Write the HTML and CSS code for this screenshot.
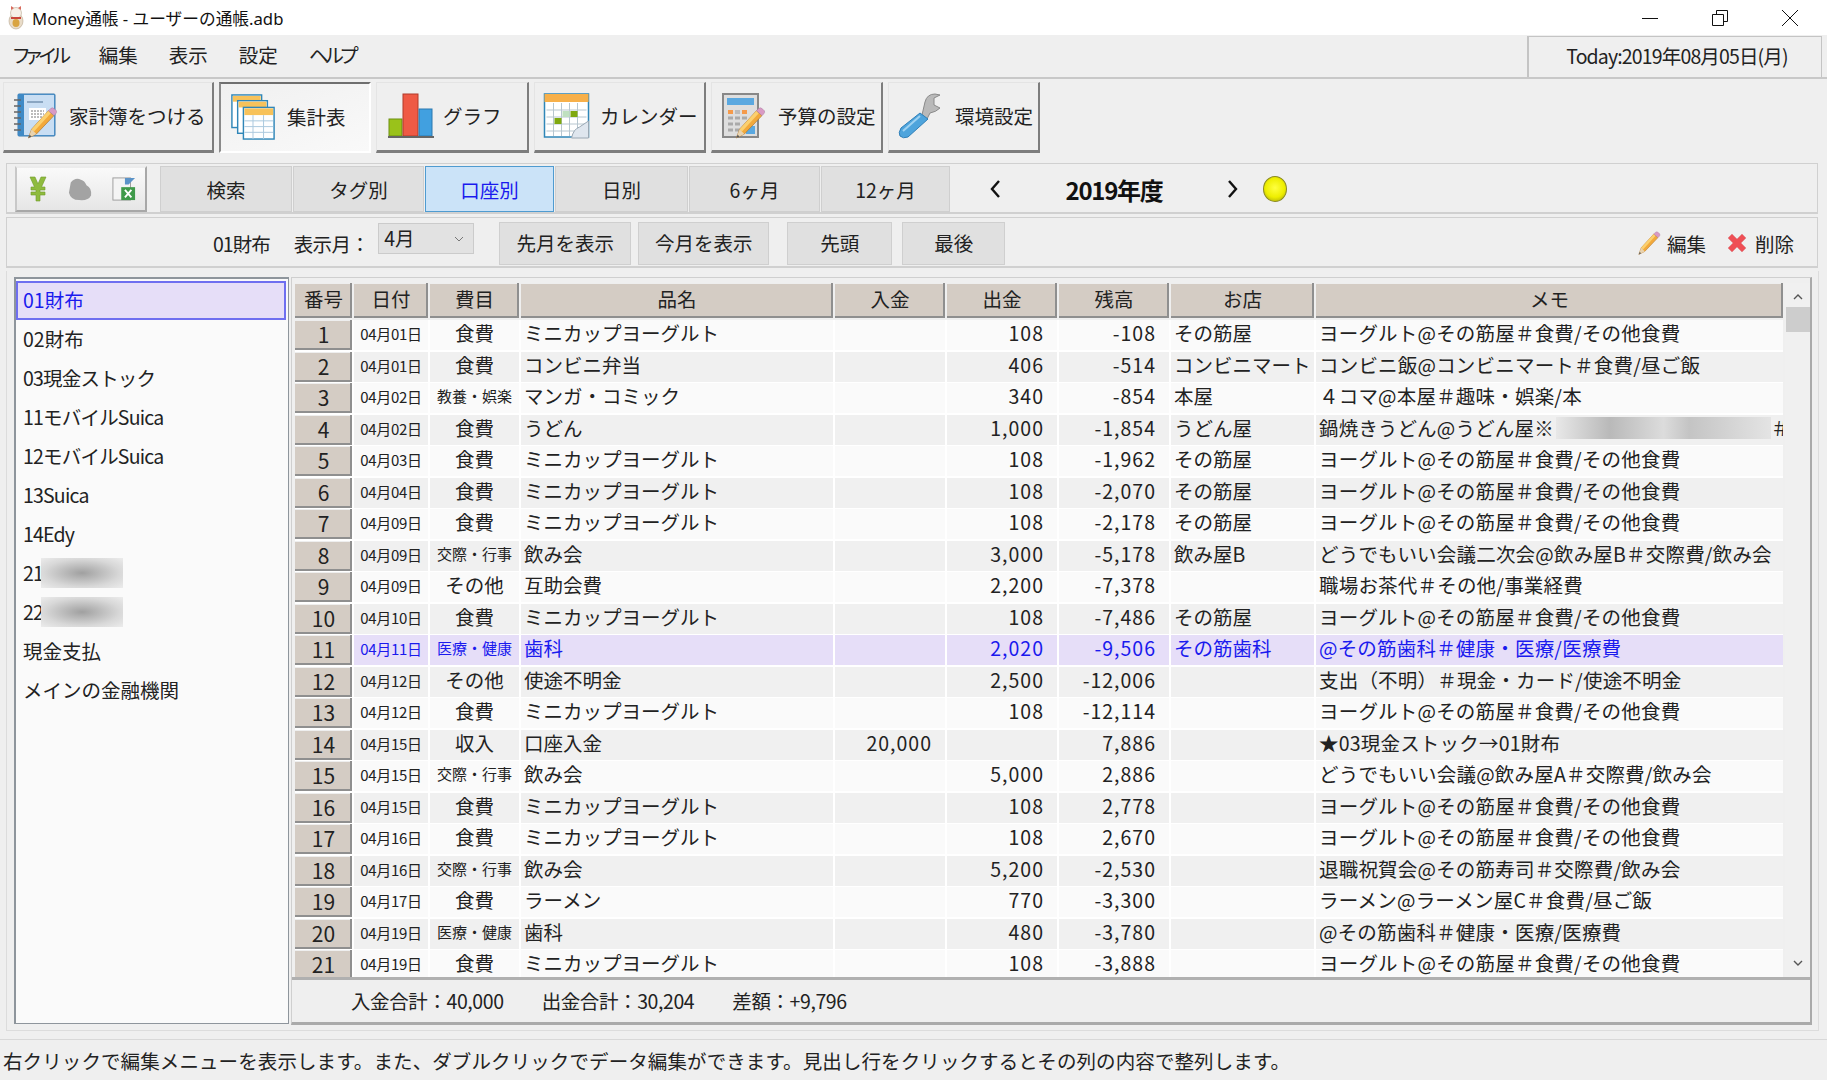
FILE: index.html
```html
<!DOCTYPE html>
<html lang="ja">
<head>
<meta charset="utf-8">
<title>Money通帳</title>
<link rel="stylesheet" href="styles.css">
</head>
<body>
<svg class="defs" width="0" height="0" aria-hidden="true">
  <defs>
    <g id="pencil">
      <path d="M3 40 L7 29 L28 6 L35 12 L13 35 Z" fill="#f2a93b" stroke="#a9702a" stroke-width=".8"/>
      <path d="M7 29 L28 6 L31 9 L10 32 Z" fill="#fbd06f"/>
      <path d="M28 6 L31 3 Q33 1 36 4 L38 6 Q39 8 37 10 L35 12 Z" fill="#d99ac4" stroke="#a57aa0" stroke-width=".6"/>
      <path d="M3 40 L7 29 L13 35 Z" fill="#e8d3b0"/>
      <path d="M3 40 L4.5 36 L7 38 Z" fill="#555"/>
    </g>
  </defs>
</svg>
<div class="app">
  <header class="titlebar">
    <svg class="appicon" viewBox="0 0 20 24"><ellipse cx="10" cy="15" rx="7" ry="8" fill="#e9dcc8" stroke="#b9a890" stroke-width=".6"/><circle cx="10" cy="7" r="5.5" fill="#f6efe6" stroke="#b9a890" stroke-width=".6"/><path d="M5 4 L5 0 L8 2 Z M15 4 L15 0 L12 2 Z" fill="#d96a5c"/><rect x="5" y="11" width="10" height="2" fill="#c9463a"/><ellipse cx="10" cy="17" rx="3.5" ry="4" fill="#d9a441"/></svg>
    <span class="apptitle">Money通帳 - ユーザーの通帳.adb</span>
    <div class="winbtns">
      <svg class="winbtn" viewBox="0 0 16 16"><path d="M0 8.5H16" stroke="#111" fill="none"/></svg>
      <svg class="winbtn" viewBox="0 0 16 16"><path d="M.5 4.5H11.5V15.5H.5Z M4.5 4V.5H15.5V11.5H12" stroke="#111" fill="none"/></svg>
      <svg class="winbtn" viewBox="0 0 16 16"><path d="M0 0L16 16M16 0L0 16" stroke="#111" fill="none"/></svg>
    </div>
  </header>

  <nav class="menubar">
    <span class="menu kana">ファイル</span><span class="menu">編集</span><span class="menu">表示</span><span class="menu">設定</span><span class="menu kana">ヘルプ</span>
    <div class="today">Today:2019年08月05日(月)</div>
  </nav>

  <div class="toolbar">
    <div class="tool w1">
      <svg class="ticon" viewBox="0 0 46 46">
        <rect x="5" y="1" width="37" height="42" rx="1" fill="#5aa0d8" stroke="#3a7bb0"/>
        <rect x="10" y="2" width="31" height="40" fill="#c9def3"/>
        <rect x="5" y="1" width="6" height="42" fill="#3f8ac6"/>
        <path d="M1 7h7M1 13h7M1 19h7M1 25h7M1 31h7M1 37h7" stroke="#666" stroke-width="1.6"/>
        <rect x="14" y="8" width="16" height="2" fill="#8aa6c2"/>
        <rect x="16" y="15" width="17" height="12" fill="#fff"/>
        <path d="M18 18h13M18 21h13M18 24h13" stroke="#777" stroke-dasharray="2 1"/>
        <use href="#pencil" transform="translate(13 13) scale(.8)"/>
      </svg>
      <span>家計簿をつける</span>
    </div>
    <div class="tool w2 active">
      <svg class="ticon" viewBox="0 0 46 48">
        <rect x="1" y="1" width="31" height="34" fill="#fff" stroke="#2f86b8" stroke-width="1.5"/><rect x="2" y="2" width="29" height="6" fill="#f7c25a"/>
        <rect x="7" y="7" width="31" height="34" fill="#fff" stroke="#2f86b8" stroke-width="1.5"/><rect x="8" y="8" width="29" height="6" fill="#f7c25a"/>
        <rect x="13" y="14" width="32" height="33" fill="#fdfeff" stroke="#2f86b8" stroke-width="1.5"/><rect x="14" y="15" width="30" height="7" fill="#f7c25a"/>
        <path d="M14 28h30M14 34h30M14 40h30M23 22v25M34 22v25" stroke="#a9c8de"/>
      </svg>
      <span>集計表</span>
    </div>
    <div class="tool w3">
      <svg class="ticon" viewBox="0 0 46 46">
        <rect x="1" y="26" width="13" height="17" fill="#9ac21a" stroke="#6d8f10"/>
        <rect x="15" y="1" width="15" height="42" fill="#ef5a45" stroke="#b23a2b"/>
        <rect x="31" y="16" width="13" height="27" fill="#41a0e0" stroke="#2a78b0"/>
        <rect x="0" y="43" width="46" height="2" fill="#666"/>
      </svg>
      <span>グラフ</span>
    </div>
    <div class="tool w4">
      <svg class="ticon" viewBox="0 0 46 46">
        <rect x="1" y="1" width="44" height="43" fill="#fff" stroke="#2f86b8" stroke-width="1.5"/>
        <rect x="1" y="1" width="44" height="8" fill="#f7b04a"/>
        <path d="M3 17h40M3 24h40M3 31h40M3 38h40M10 10v33M18 10v33M26 10v33M34 10v33" stroke="#b7c6cf"/>
        <rect x="11" y="25" width="7" height="6" fill="#7fa80f"/><rect x="27" y="18" width="7" height="6" fill="#7fa80f"/><rect x="19" y="18" width="7" height="6" fill="#bfe0c0"/>
        <path d="M28 45 Q30 36 36 34 L45 28 V45Z" fill="#dfe6ee" stroke="#9aa8b4"/>
      </svg>
      <span>カレンダー</span>
    </div>
    <div class="tool w5">
      <svg class="ticon" viewBox="0 0 44 46">
        <rect x="1" y="1" width="35" height="43" fill="#dedede" stroke="#888" stroke-width="2"/>
        <rect x="5" y="5" width="27" height="7" fill="#5aa8e0"/>
        <rect x="6" y="17" width="5" height="4" fill="#f59a4a"/><rect x="13" y="17" width="5" height="4" fill="#bbb"/><rect x="20" y="17" width="5" height="4" fill="#f59a4a"/>
        <path d="M6 25h5M13 25h5M20 25h5M6 31h5M13 31h5M6 37h5M13 37h5" stroke="#aaa" stroke-width="3"/>
        <rect x="24" y="33" width="9" height="8" fill="#5aa8e0"/>
        <use href="#pencil" transform="translate(12 13) scale(.8)"/>
      </svg>
      <span>予算の設定</span>
    </div>
    <div class="tool w6">
      <svg class="ticon" viewBox="0 0 44 46">
        <path d="M24 22 L27 9 Q29 1 37 1 L42 2 L36 5 L36 12 L42 15 Q38 19 32 20 L29 26 Z" fill="#b9b9b9" stroke="#8a8a8a"/>
        <path d="M22 20 L30 26 L10 44 Q5 46 2 43 Q0 40 3 35 Z" fill="#4ea4dc" stroke="#2f7fb8"/>
        <path d="M5 38 L22 23" stroke="#9fd2f2" stroke-width="2"/>
      </svg>
      <span>環境設定</span>
    </div>
  </div>

  <section class="panel tabs-panel">
    <div class="iconbox">
      <svg class="miniicon yen" viewBox="0 0 20 26"><path d="M2 1H7L10 8L13 1H18L13.5 11H17V14H12V16H17V19H12V25H8V19H3V16H8V14H3V11H6.5Z" fill="#8fbb3e" stroke="#6f9a2a" stroke-width=".6"/></svg>
      <svg class="miniicon blob" viewBox="0 0 26 26"><path d="M3 6 Q8 0 14 3 Q18 4 20 9 Q26 12 25 20 Q22 26 12 25 Q3 25 1 17Z" fill="#a3a3a3"/></svg>
      <svg class="miniicon xls" viewBox="0 0 26 26"><rect x="1" y="1" width="19" height="24" fill="#f4f4f4" stroke="#999"/><path d="M14 1 L25 1 L18 8 H14Z" fill="#5b93c8"/><rect x="10" y="11" width="15" height="14" fill="#3f9a4a"/><path d="M14 14l7 8M21 14l-7 8" stroke="#fff" stroke-width="2"/></svg>
    </div>
    <div class="tab t1">検索</div>
    <div class="tab t2">タグ別</div>
    <div class="tab t3 current">口座別</div>
    <div class="tab t4">日別</div>
    <div class="tab t5">6ヶ月</div>
    <div class="tab t6">12ヶ月</div>
    <svg class="chev prev" viewBox="0 0 12 20"><path d="M10 2L3 10L10 18" fill="none" stroke="#111" stroke-width="2.4"/></svg>
    <div class="year">2019年度</div>
    <svg class="chev next" viewBox="0 0 12 20"><path d="M2 2L9 10L2 18" fill="none" stroke="#111" stroke-width="2.4"/></svg>
    <div class="led"></div>
  </section>

  <section class="panel filter-panel">
    <span class="acct">01財布</span>
    <span class="lbl">表示月：</span>
    <div class="select"><span>4月</span><svg class="selarrow" viewBox="0 0 10 6"><path d="M1 1L5 5L9 1" fill="none" stroke="#777" stroke-width="1"/></svg></div>
    <div class="btn b1">先月を表示</div>
    <div class="btn b2">今月を表示</div>
    <div class="btn b3">先頭</div>
    <div class="btn b4">最後</div>
    <div class="actions">
      <svg class="act-icon" viewBox="0 0 40 42"><use href="#pencil"/></svg><span class="act-text">編集</span>
      <svg class="act-icon del" viewBox="0 0 20 20"><path d="M1 5 L5 1 L10 6 L15 1 L19 5 L14 10 L19 15 L15 19 L10 14 L5 19 L1 15 L6 10Z" fill="#ef4f55" stroke="#d8858a" stroke-width=".6"/></svg><span class="act-text">削除</span>
    </div>
  </section>

  <main class="body-panel">
    <ul class="acclist">
      <li class="sel">01財布</li>
      <li>02財布</li>
      <li class="tight">03現金ストック</li>
      <li class="tight">11モバイルSuica</li>
      <li class="tight">12モバイルSuica</li>
      <li class="tight">13Suica</li>
      <li class="tight">14Edy</li>
      <li class="tight">21<i class="smudge"></i></li>
      <li class="tight">22<i class="smudge"></i></li>
      <li>現金支払</li>
      <li>メインの金融機関</li>
    </ul>
    <div class="right">
      <div class="gridwrap">
        <div class="grid">
          <div class="row headrow">
            <div class="th">番号</div><div class="th">日付</div><div class="th">費目</div><div class="th">品名</div><div class="th">入金</div><div class="th">出金</div><div class="th">残高</div><div class="th">お店</div><div class="th">メモ</div>
          </div>
          <div class="rows">
            <div class="row"><div class="no">1</div><div class="d">04月01日</div><div class="c">食費</div><div class="t">ミニカップヨーグルト</div><div class="n"></div><div class="n">108</div><div class="n">-108</div><div class="t">その筋屋</div><div class="t">ヨーグルト@その筋屋＃食費/その他食費</div></div>
            <div class="row"><div class="no">2</div><div class="d">04月01日</div><div class="c">食費</div><div class="t">コンビニ弁当</div><div class="n"></div><div class="n">406</div><div class="n">-514</div><div class="t">コンビニマート</div><div class="t">コンビニ飯@コンビニマート＃食費/昼ご飯</div></div>
            <div class="row"><div class="no">3</div><div class="d">04月02日</div><div class="c s">教養・娯楽</div><div class="t">マンガ・コミック</div><div class="n"></div><div class="n">340</div><div class="n">-854</div><div class="t">本屋</div><div class="t">４コマ@本屋＃趣味・娯楽/本</div></div>
            <div class="row"><div class="no">4</div><div class="d">04月02日</div><div class="c">食費</div><div class="t">うどん</div><div class="n"></div><div class="n">1,000</div><div class="n">-1,854</div><div class="t">うどん屋</div><div class="t memo-clip">鍋焼きうどん@うどん屋※<i class="smudge wide"></i>＃</div></div>
            <div class="row"><div class="no">5</div><div class="d">04月03日</div><div class="c">食費</div><div class="t">ミニカップヨーグルト</div><div class="n"></div><div class="n">108</div><div class="n">-1,962</div><div class="t">その筋屋</div><div class="t">ヨーグルト@その筋屋＃食費/その他食費</div></div>
            <div class="row"><div class="no">6</div><div class="d">04月04日</div><div class="c">食費</div><div class="t">ミニカップヨーグルト</div><div class="n"></div><div class="n">108</div><div class="n">-2,070</div><div class="t">その筋屋</div><div class="t">ヨーグルト@その筋屋＃食費/その他食費</div></div>
            <div class="row"><div class="no">7</div><div class="d">04月09日</div><div class="c">食費</div><div class="t">ミニカップヨーグルト</div><div class="n"></div><div class="n">108</div><div class="n">-2,178</div><div class="t">その筋屋</div><div class="t">ヨーグルト@その筋屋＃食費/その他食費</div></div>
            <div class="row"><div class="no">8</div><div class="d">04月09日</div><div class="c s">交際・行事</div><div class="t">飲み会</div><div class="n"></div><div class="n">3,000</div><div class="n">-5,178</div><div class="t">飲み屋B</div><div class="t">どうでもいい会議二次会@飲み屋B＃交際費/飲み会</div></div>
            <div class="row"><div class="no">9</div><div class="d">04月09日</div><div class="c">その他</div><div class="t">互助会費</div><div class="n"></div><div class="n">2,200</div><div class="n">-7,378</div><div class="t"></div><div class="t">職場お茶代＃その他/事業経費</div></div>
            <div class="row"><div class="no">10</div><div class="d">04月10日</div><div class="c">食費</div><div class="t">ミニカップヨーグルト</div><div class="n"></div><div class="n">108</div><div class="n">-7,486</div><div class="t">その筋屋</div><div class="t">ヨーグルト@その筋屋＃食費/その他食費</div></div>
            <div class="row hl"><div class="no">11</div><div class="d">04月11日</div><div class="c s">医療・健康</div><div class="t">歯科</div><div class="n"></div><div class="n">2,020</div><div class="n">-9,506</div><div class="t">その筋歯科</div><div class="t">@その筋歯科＃健康・医療/医療費</div></div>
            <div class="row"><div class="no">12</div><div class="d">04月12日</div><div class="c">その他</div><div class="t">使途不明金</div><div class="n"></div><div class="n">2,500</div><div class="n">-12,006</div><div class="t"></div><div class="t">支出（不明）＃現金・カード/使途不明金</div></div>
            <div class="row"><div class="no">13</div><div class="d">04月12日</div><div class="c">食費</div><div class="t">ミニカップヨーグルト</div><div class="n"></div><div class="n">108</div><div class="n">-12,114</div><div class="t"></div><div class="t">ヨーグルト@その筋屋＃食費/その他食費</div></div>
            <div class="row"><div class="no">14</div><div class="d">04月15日</div><div class="c">収入</div><div class="t">口座入金</div><div class="n">20,000</div><div class="n"></div><div class="n">7,886</div><div class="t"></div><div class="t">★03現金ストック→01財布</div></div>
            <div class="row"><div class="no">15</div><div class="d">04月15日</div><div class="c s">交際・行事</div><div class="t">飲み会</div><div class="n"></div><div class="n">5,000</div><div class="n">2,886</div><div class="t"></div><div class="t">どうでもいい会議@飲み屋A＃交際費/飲み会</div></div>
            <div class="row"><div class="no">16</div><div class="d">04月15日</div><div class="c">食費</div><div class="t">ミニカップヨーグルト</div><div class="n"></div><div class="n">108</div><div class="n">2,778</div><div class="t"></div><div class="t">ヨーグルト@その筋屋＃食費/その他食費</div></div>
            <div class="row"><div class="no">17</div><div class="d">04月16日</div><div class="c">食費</div><div class="t">ミニカップヨーグルト</div><div class="n"></div><div class="n">108</div><div class="n">2,670</div><div class="t"></div><div class="t">ヨーグルト@その筋屋＃食費/その他食費</div></div>
            <div class="row"><div class="no">18</div><div class="d">04月16日</div><div class="c s">交際・行事</div><div class="t">飲み会</div><div class="n"></div><div class="n">5,200</div><div class="n">-2,530</div><div class="t"></div><div class="t">退職祝賀会@その筋寿司＃交際費/飲み会</div></div>
            <div class="row"><div class="no">19</div><div class="d">04月17日</div><div class="c">食費</div><div class="t">ラーメン</div><div class="n"></div><div class="n">770</div><div class="n">-3,300</div><div class="t"></div><div class="t">ラーメン@ラーメン屋C＃食費/昼ご飯</div></div>
            <div class="row"><div class="no">20</div><div class="d">04月19日</div><div class="c s">医療・健康</div><div class="t">歯科</div><div class="n"></div><div class="n">480</div><div class="n">-3,780</div><div class="t"></div><div class="t">@その筋歯科＃健康・医療/医療費</div></div>
            <div class="row"><div class="no">21</div><div class="d">04月19日</div><div class="c">食費</div><div class="t">ミニカップヨーグルト</div><div class="n"></div><div class="n">108</div><div class="n">-3,888</div><div class="t"></div><div class="t">ヨーグルト@その筋屋＃食費/その他食費</div></div>
          </div>
        </div>
        <div class="scrollbar">
          <svg class="sarrow" viewBox="0 0 12 8"><path d="M2 6L6 2L10 6" fill="none" stroke="#555" stroke-width="1.4"/></svg>
          <div class="thumb"></div>
          <svg class="sarrow bottom" viewBox="0 0 12 8"><path d="M2 2L6 6L10 2" fill="none" stroke="#555" stroke-width="1.4"/></svg>
        </div>
      </div>
      <div class="summary"><span>入金合計：40,000</span><span>出金合計：30,204</span><span>差額：+9,796</span></div>
    </div>
  </main>

  <footer class="statusbar">右クリックで編集メニューを表示します。また、ダブルクリックでデータ編集ができます。見出し行をクリックするとその列の内容で整列します。</footer>
</div>
</body>
</html>
```
FILE: styles.css
```css
* { box-sizing: border-box; }
html, body { margin: 0; padding: 0; }
body {
  font-family: "Liberation Sans Narrow", "Noto Sans CJK JP", sans-serif;
  font-size: 19.5px;
  color: #222;
  background: #efefef;
}
.defs { position: absolute; }
.app { width: 1827px; height: 1080px; overflow: hidden; display: flex; flex-direction: column; }

.titlebar { height: 35px; background: #fff; display: flex; align-items: center; padding-left: 6px; flex: none; }
.appicon { width: 20px; height: 26px; margin-right: 6px; }
.apptitle { font-family: "Noto Sans", "Noto Sans CJK JP", sans-serif; font-size: 16.7px; color: #111; }
.winbtns { margin-left: auto; display: flex; gap: 54px; padding-right: 29px; }
.winbtn { width: 16px; height: 16px; }

.menubar { height: 44px; flex: none; display: flex; align-items: center; padding: 0 0 4px 13px; gap: 31px; border-bottom: 2px solid #c8c8c8; position: relative; }
.menu { font-feature-settings: "palt"; }
.menu.kana { letter-spacing: -3.2px; }
.today { position: absolute; right: 5px; top: 1px; width: 295px; height: 41px; border: 1px solid #c4c4c4; border-left-width: 2px; border-bottom: none; display: flex; align-items: center; justify-content: center; padding: 0 0 3px 4px; letter-spacing: -.85px; }

.toolbar { height: 77px; flex: none; display: flex; padding: 3px 0 0 3px; gap: 5px; }
.tool { height: 71px; display: flex; align-items: center; padding-bottom: 2px; border: 1px solid #e4e4e4; border-right: 2px solid #7d7d7d; border-bottom: 3px solid #7d7d7d; background: #efefef; }
.tool .ticon { flex: none; height: 46px; }
.w1 { width: 211px; padding-left: 9px; gap: 10px; }
.w2 { width: 152px; padding-left: 9px; gap: 11px; }
.w3 { width: 153px; padding-left: 11px; gap: 9px; }
.w4 { width: 172px; padding-left: 8px; gap: 10px; }
.w5 { width: 172px; padding-left: 10px; gap: 12px; }
.w6 { width: 152px; padding-left: 9px; gap: 13px; }
.w1 .ticon { width: 46px; } .w2 .ticon { width: 46px; } .w3 .ticon { width: 46px; }
.w4 .ticon { width: 47px; } .w5 .ticon { width: 44px; } .w6 .ticon { width: 44px; }
.active { border: none; border-top: 2px solid #6f6f6f; border-left: 2px solid #8a8a8a; border-right: 2px solid #fff; border-bottom: 2px solid #fff; background: linear-gradient(160deg, #f0f0f0, #f9f9f9); }

.panel { margin-left: 6px; width: 1812px; border: 1px solid #d0d0d0; border-bottom-width: 2px; display: flex; align-items: center; flex: none; padding-top: 2px; }
.tabs-panel { height: 51px; margin-top: 7px; padding-left: 8px; }
.filter-panel { height: 51px; margin-top: 3px; position: relative; padding-left: 206px; }

.iconbox { width: 132px; height: 46px; border: 2px solid #a8a8a8; border-top-color: #ececec; border-left-color: #c8c8c8; background: linear-gradient(#fafafa, #e6e6e6); display: flex; align-items: center; justify-content: space-between; padding: 0 9px 0 11px; margin-right: 13px; }
.miniicon { width: 24px; height: 26px; }
.yen { width: 20px; }
.tab { height: 46px; background: #e0e0e0; border: 1px solid #cfcfcf; display: flex; align-items: center; justify-content: center; margin-right: 1px; }
.t1 { width: 132px; } .t2 { width: 131px; } .t3 { width: 129px; } .t4 { width: 133px; } .t5 { width: 131px; } .t6 { width: 129px; }
.current { background: #cbe3f8; border-color: #4f9bd0; color: #1a1aee; }
.chev { width: 12px; height: 20px; }
.prev { margin-left: 38px; }
.year { width: 226px; text-align: center; font-size: 24px; font-weight: 700; color: #111; letter-spacing: -1.3px; }
.led { width: 24px; height: 26px; border-radius: 50%; margin-left: 24px; background: radial-gradient(circle at 50% 45%, #ffff40 0, #eeee00 55%, #9c9c10 100%); border: 1px solid #8a8a20; }

.acct { margin-right: 24px; letter-spacing: -1px; }
.lbl { margin-right: 9px; letter-spacing: -.6px; }
.select { width: 96px; height: 31px; align-self: flex-start; margin-top: 3px; background: #e2e2e2; border: 1px solid #cbcbcb; display: flex; align-items: center; justify-content: space-between; padding: 0 9px 0 5px; margin-right: 25px; }
.select span { margin-top: -3px; }
.selarrow { width: 10px; height: 6px; }
.btn { height: 43px; padding-bottom: 2px; background: #e0e0e0; border: 1px solid #cfcfcf; display: flex; align-items: center; justify-content: center; }
.b1 { width: 132px; margin-right: 7px; } .b2 { width: 131px; margin-right: 18px; } .b3 { width: 105px; margin-right: 10px; } .b4 { width: 103px; }
.actions { margin-left: auto; display: flex; align-items: center; padding-right: 23px; }
.act-icon { width: 24px; height: 26px; margin-right: 6px; }
.del { width: 20px; height: 20px; margin-right: 8px; }
.act-text { margin-right: 21px; }
.act-text:last-child { margin-right: 0; }

.body-panel { flex: 1; margin: 3px 8px 8px 6px; border: 1px solid #dcdcdc; border-top: none; display: flex; padding: 6px 6px 5px 7px; min-height: 0; }
.acclist { list-style: none; margin: 0 0 1px; padding: 2px 2px 0 0; width: 275px; flex: none; background: #fafafa; border: 2px solid #8e959c; border-right-width: 1px; border-bottom-width: 1px; }
.acclist li { height: 39px; padding: 0 0 2px 7px; display: flex; align-items: center; }
.acclist .sel { background: #e6def8; border: 2px solid #6f6ff0; color: #1a1aee; padding-left: 5px; }
.acclist .tight { letter-spacing: -.8px; }
.smudge { display: inline-block; width: 82px; height: 30px; margin-left: -2px; background: radial-gradient(ellipse at 50% 50%, #a0a0a0 0, #d8d8d8 65%, #ececec 100%); }

.right { flex: 1; margin-left: 2px; display: flex; flex-direction: column; min-width: 0; border: 1px solid #cfcfcf; border-right: 2px solid #aaa; border-bottom: 3px solid #aaa; }
.gridwrap { height: 702px; display: flex; flex: none; padding: 5px 0 0 3px; border-bottom: 3px solid #b0b0b0; overflow: hidden; }
.grid { width: 1488px; flex: none; }
.row { display: grid; grid-template-columns: 57px 74px 89px 312px 110px 110px 110px 143px 467px; column-gap: 2px; height: 30px; align-items: stretch; }
.headrow { height: 35px; margin-bottom: 2px; }
.th { background: #d4ccc4; padding-bottom: 4px; line-height: 24px; display: flex; align-items: center; justify-content: center; box-shadow: inset 0 -2px #8f8f8f, inset -2px 0 #8f8f8f, inset 0 1px #eee; }
.rows { display: flex; flex-direction: column; gap: 1.5px; background: #fff; }
.rows .row > div { background: #fafafa; display: flex; align-items: center; white-space: nowrap; padding-bottom: 4px; line-height: 22px; }
.rows .row > .memo-clip { overflow: hidden; }
.rows .row:nth-child(even) > div { background: #f0f0f0; }
.rows .row > .no { background: #d4ccc4; justify-content: center; box-shadow: inset 0 -2px #8f8f8f, inset -2px 0 #8f8f8f, inset 0 1px #eee; font-size: 21px; padding-bottom: 2px; }
.rows .row:nth-child(even) > .no { background: #d4ccc4; }
.rows .row.hl > div:not(.no) { background: #e6def8; color: #1a1aee; }
.rows .row > .d { font-size: 15px; justify-content: center; letter-spacing: -.3px; padding-bottom: 2px; }
.c { justify-content: center; }
.c.s { font-size: 15px; }
.t { padding-left: 3px; }
.t:last-child { letter-spacing: .2px; }
.n { justify-content: flex-end; padding-right: 13px; letter-spacing: 1px; }
.wide { width: 215px; height: 22px; flex: none; background: linear-gradient(90deg, #e8e8e8 0, #b9b9b9 25%, #dcdcdc 50%, #c4c4c4 62%, #e4e4e4 100%); margin-left: 2px; }

.scrollbar { flex: 1; margin-left: 2px; background: #f0f0f0; display: flex; flex-direction: column; align-items: center; position: relative; }
.sarrow { width: 12px; height: 8px; margin-top: 10px; }
.sarrow.bottom { margin-top: auto; margin-bottom: 10px; }
.thumb { width: 24px; height: 25px; margin-top: 6px; background: #cdcdcd; }
.summary { flex: 1; display: flex; align-items: center; padding: 0 0 2px 59px; gap: 38px; letter-spacing: -.4px; }

.statusbar { height: 41px; flex: none; border-top: 1px solid #d8d8d8; display: flex; align-items: center; padding-left: 3px; white-space: nowrap; letter-spacing: .1px; }
```
